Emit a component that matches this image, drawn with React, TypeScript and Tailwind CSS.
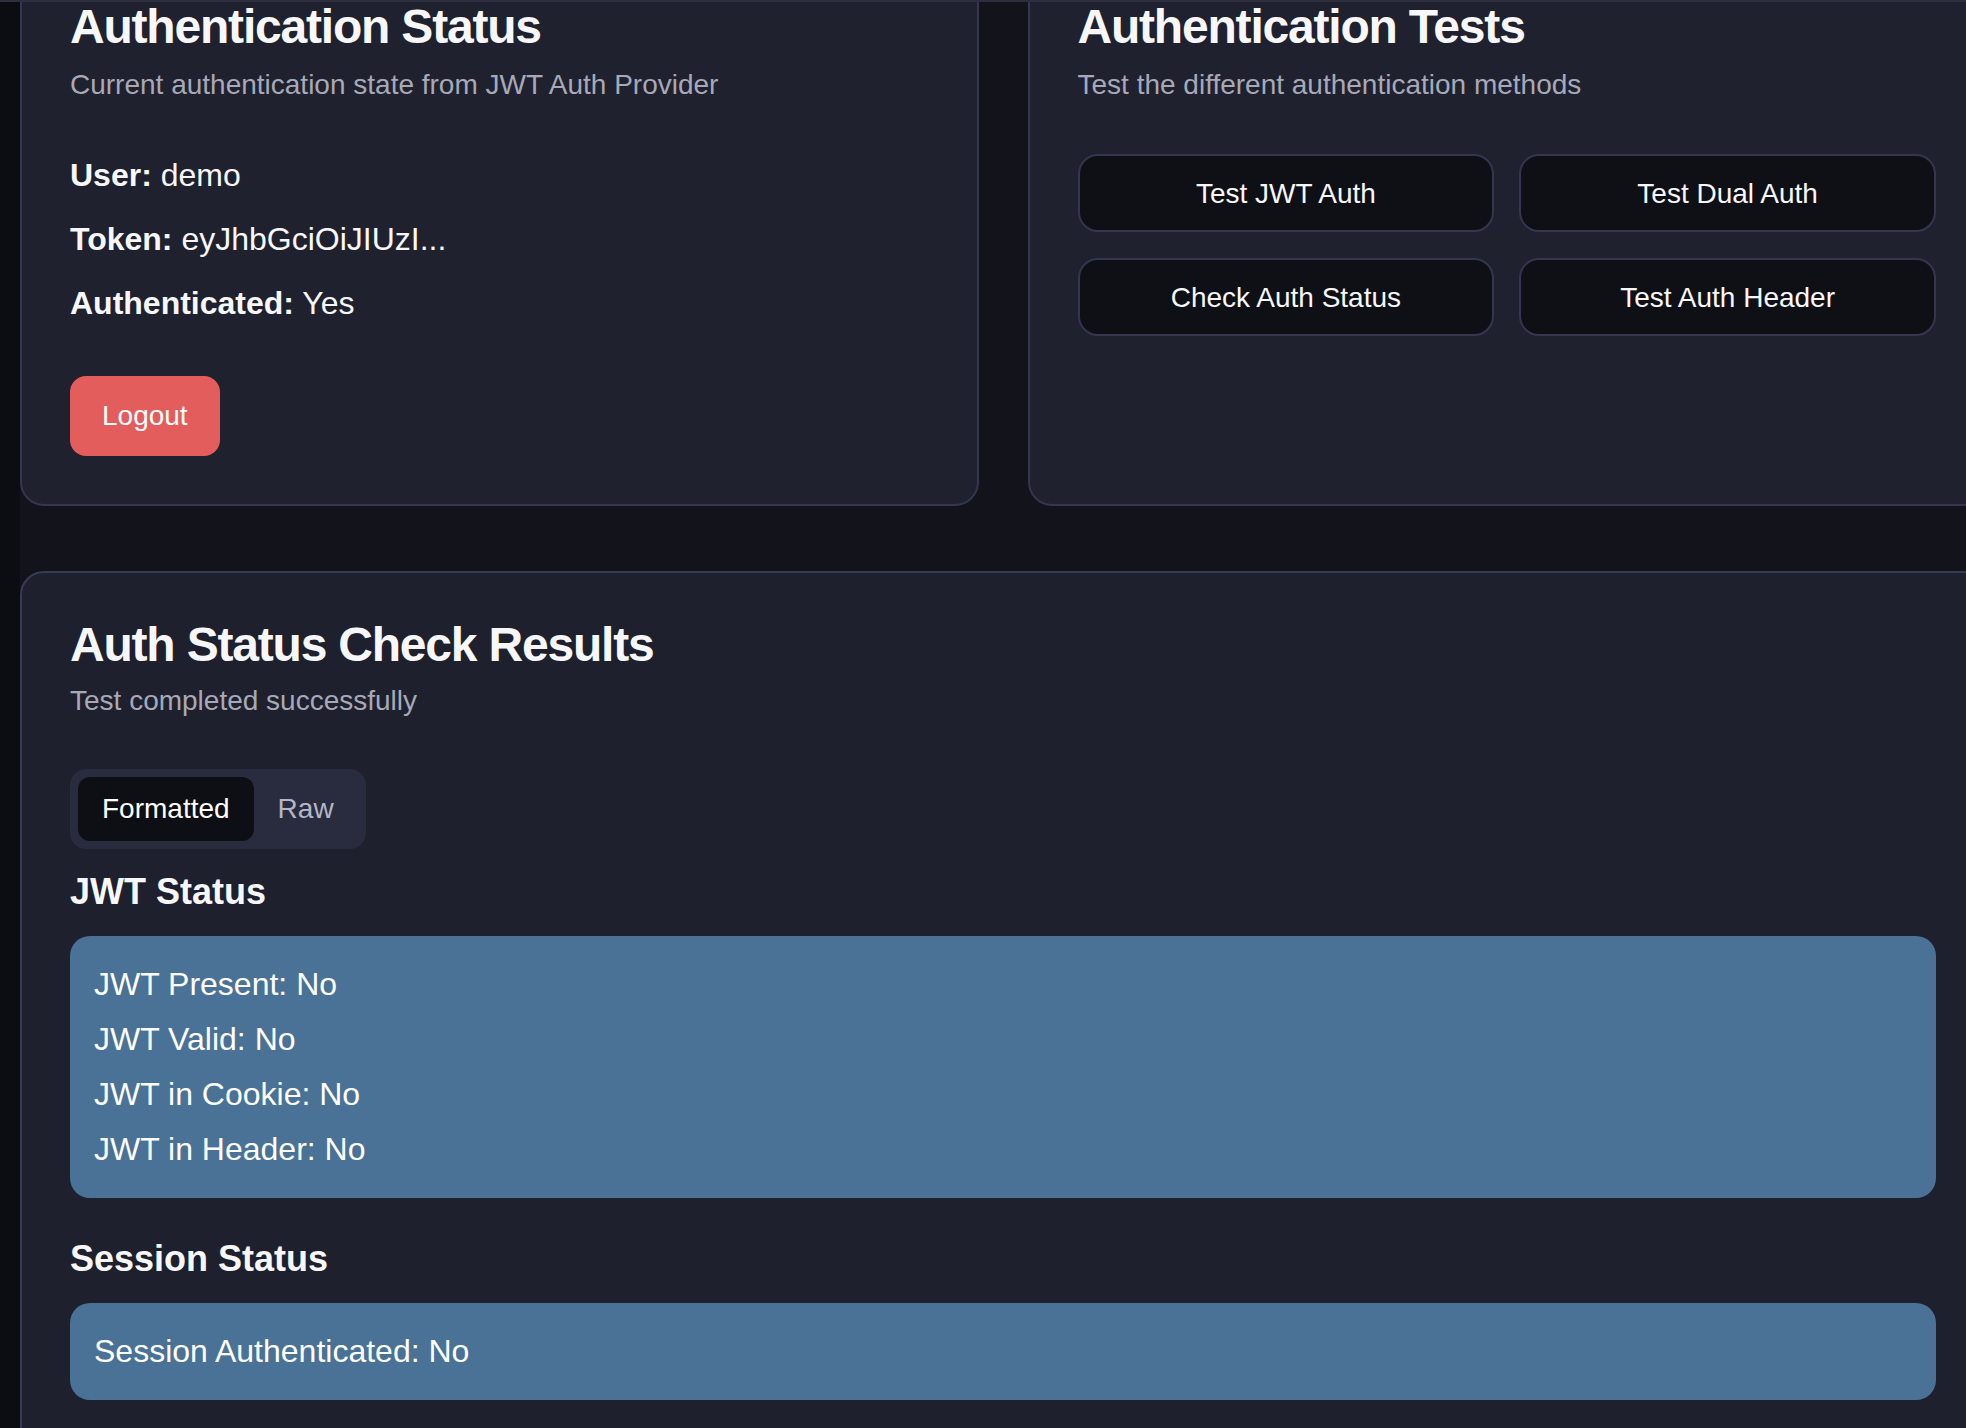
import React from 'react';

const font = { fontFamily: '"Liberation Sans", Arial, Helvetica, sans-serif' };

const CardHeader: React.FC<{ title: string; subtitle: string; gap?: string }> = ({ title, subtitle, gap = 'gap-[12px]' }) => (
    <div className={`flex flex-col ${gap} p-[48px]`}>
        <h2 className="text-[48px] leading-[48px] font-bold tracking-[-1.2px] text-[#f7f7f9]">{title}</h2>
        <p className="text-[28px] leading-[40px] text-[#a7a9b7]">{subtitle}</p>
    </div>
);

const InfoBox: React.FC<{ lines: string[] }> = ({ lines }) => (
    <div className="rounded-[20px] bg-[#4a7196] px-[24px] py-[21px]">
        {lines.map((line) => (
            <p key={line} className="text-[32px] leading-[55px] text-white">{line}</p>
        ))}
    </div>
);

export default function App() {
    return (
        <div className="h-[1428px] w-full overflow-hidden bg-[#12131b] flex" style={font}>
            {/* left edge of the sidebar */}
            <div className="w-[20px] shrink-0 bg-[#0c0d12]"></div>

            <div className="flex-1 min-w-0 relative">
                {/* top header border */}
                <div className="absolute top-0 left-[-20px] right-0 h-[2px] bg-[#2b2e40] z-10"></div>

                <div className="w-[1966px] -mt-[47px] flex flex-col gap-[65px]">
                    {/* Top row */}
                    <div className="grid grid-cols-2 gap-[49px]">
                        {/* Authentication Status */}
                        <div className="rounded-[24px] border-2 border-[#33364e] bg-[#1f212f]">
                            <CardHeader title="Authentication Status" subtitle="Current authentication state from JWT Auth Provider" gap="gap-[14px]" />
                            <div className="-mt-[2px] px-[48px] pb-[48px]">
                                <div className="flex flex-col gap-[16px] text-[32px] leading-[48px] text-[#f7f7f9]">
                                    <p><span className="font-bold">User:</span> demo</p>
                                    <p><span className="font-bold">Token:</span> eyJhbGciOiJIUzI...</p>
                                    <p><span className="font-bold">Authenticated:</span> Yes</p>
                                </div>
                                <button className="mt-[49px] h-[80px] px-[32px] rounded-[16px] bg-[#e35d5d] text-[28px] text-white">
                                    Logout
                                </button>
                            </div>
                        </div>

                        {/* Authentication Tests */}
                        <div className="rounded-[24px] border-2 border-[#33364e] bg-[#1f212f]">
                            <CardHeader title="Authentication Tests" subtitle="Test the different authentication methods" gap="gap-[14px]" />
                            <div className="-mt-[2px] px-[48px] pb-[48px]">
                                <div className="mt-[3px] grid grid-cols-2 gap-x-[25px] gap-y-[26px]">
                                    {['Test JWT Auth', 'Test Dual Auth', 'Check Auth Status', 'Test Auth Header'].map((label) => (
                                        <button
                                            key={label}
                                            className="h-[78px] pt-[2px] rounded-[20px] border-2 border-[#33364e] bg-[#0f1016] text-[28px] text-[#f7f7f9]"
                                        >
                                            {label}
                                        </button>
                                    ))}
                                </div>
                            </div>
                        </div>
                    </div>

                    {/* Results */}
                    <div className="rounded-[24px] border-2 border-[#383b57] bg-[#1e202e]">
                        <CardHeader title="Auth Status Check Results" subtitle="Test completed successfully" />
                        <div className="px-[48px] pb-[48px]">
                            <div className="inline-flex h-[80px] items-center rounded-[16px] bg-[#292b3e] p-[8px]">
                                <div className="h-[64px] px-[24px] flex items-center rounded-[12px] bg-[#0e0f14] text-[28px] text-white">Formatted</div>
                                <div className="h-[64px] px-[24px] flex items-center text-[28px] text-[#b4b6c4]">Raw</div>
                            </div>

                            <div className="mt-[15px] flex flex-col gap-[33px]">
                                <div>
                                    <h3 className="text-[36px] leading-[56px] font-bold text-[#f7f7f9] mb-[16px]">JWT Status</h3>
                                    <InfoBox lines={['JWT Present: No', 'JWT Valid: No', 'JWT in Cookie: No', 'JWT in Header: No']} />
                                </div>
                                <div>
                                    <h3 className="text-[36px] leading-[56px] font-bold text-[#f7f7f9] mb-[16px]">Session Status</h3>
                                    <InfoBox lines={['Session Authenticated: No']} />
                                </div>
                            </div>
                        </div>
                    </div>
                </div>
            </div>
        </div>
    );
}
